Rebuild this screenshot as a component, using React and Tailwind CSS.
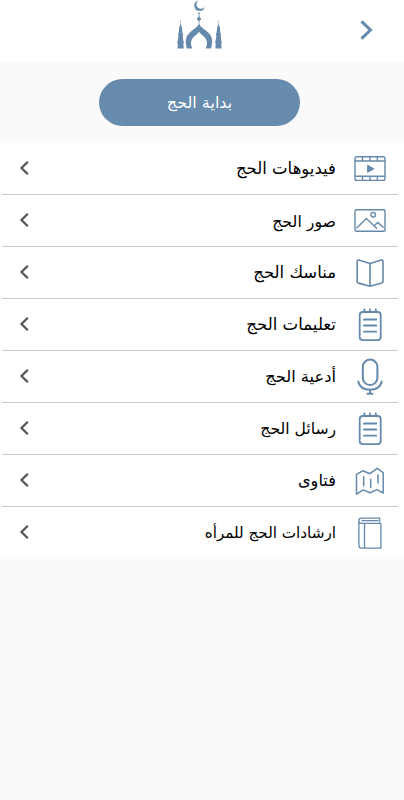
const items = [
  { label: 'فيديوهات الحج', icon: FilmIcon, size: 'text-[16.5px]' },
  { label: 'صور الحج', icon: ImageIcon, size: 'text-[15.8px]' },
  { label: 'مناسك الحج', icon: BookOpenIcon, size: 'text-[16.5px]' },
  { label: 'تعليمات الحج', icon: NotepadIcon, size: 'text-[16.6px]' },
  { label: 'أدعية الحج', icon: MicIcon, size: 'text-[16.3px]' },
  { label: 'رسائل الحج', icon: NotepadIcon, size: 'text-[15.6px]' },
  { label: 'فتاوى', icon: MapIcon, size: 'text-[16.2px]' },
  { label: 'ارشادات الحج للمرأه', icon: BookIcon, size: 'text-[15.2px]' },
];

function Icon({ children, strokeWidth = 1.4 }) {
  return (
    <svg
      className="w-9 h-[37px] shrink-0 text-[#6489ab]"
      viewBox="0 0 36 37"
      fill="none"
      stroke="currentColor"
      strokeWidth={strokeWidth}
      strokeLinecap="round"
      strokeLinejoin="round"
    >
      {children}
    </svg>
  );
}

function FilmIcon() {
  return (
    <Icon>
      <rect x="3" y="6.8" width="30" height="23.6" rx="2" />
      <path d="M3 11h30M3 26.2h30M10.5 7v4M18 7v4M25.4 7v4M10.5 26.2v4M18 26.2v4M25.4 26.2v4" />
      <path d="M15.8 15.6v6.4l5.6-3.2z" fill="currentColor" />
    </Icon>
  );
}

function ImageIcon() {
  return (
    <Icon>
      <rect x="3" y="7.7" width="30" height="21.6" rx="1.5" />
      <circle cx="21.2" cy="12.7" r="2.3" />
      <path d="M5 25.8l9.4-9.4 10.2 9.8M22.2 23.8l3.5-3.4 5.5 4.8" />
    </Icon>
  );
}

function BookOpenIcon() {
  return (
    <Icon strokeWidth={1.6}>
      <path d="M18 9.6L6.8 6.1Q5.2 5.8 5.2 7.4v20.2q0 1.2 1.2 1.5L18 32.2l11.8-3.1q1.2-.3 1.2-1.5V7.4q0-1.6-1.6-1.3zM18 9.6v22.2" />
    </Icon>
  );
}

function NotepadIcon() {
  return (
    <Icon strokeWidth={1.8}>
      <rect x="7.7" y="6" width="21" height="28.2" rx="3.2" />
      <path d="M12.4 3.4v2.4M18 3.4v2.4M23.8 3.4v2.4M11.9 13.5h12.4M11.9 19.5h12.4M11.9 25.7h12.4" />
    </Icon>
  );
}

function MicIcon() {
  return (
    <Icon strokeWidth={2}>
      <rect x="10.8" y="1.6" width="14.6" height="25.4" rx="7.3" />
      <path d="M6.2 23.6c1.6 5.4 6 8.2 11.8 8.2s10.2-2.8 11.8-8.2M18 32v3.6M15.5 35.7h5" />
    </Icon>
  );
}

function MapIcon() {
  return (
    <Icon strokeWidth={1.5}>
      <path d="M4.5 12.3L11 8.7l7 3 7.2-5.3 6 4.2v20.4l-6.2-3.4-7 3.2-6.8-2.9-6.7 4.3zM11.7 14.8v9M18.7 17.2v8.2M26 12.9v8" />
    </Icon>
  );
}

function BookIcon() {
  return (
    <Icon strokeWidth={1.3}>
      <path d="M27.7 7.8V4.2H9.4Q6.9 4.2 6.9 6.8v24.8q0 2.6 2.5 2.6h19.5V9.3H9.4Q6.9 9.3 6.9 6.9M12.5 9.5v24.5M10 6.7h16" />
    </Icon>
  );
}

function MosqueLogo() {
  return (
    <svg className="w-12 h-[50px] text-[#6489ab]" viewBox="176 0 48 50" fill="currentColor">
      <path d="M198.4 .4a5.3 5.3 0 1 0 6.3 6.6a4.62 4.62 0 1 1-6.3-6.6z" />
      <circle cx="199" cy="13.5" r="1" />
      <path d="M198.6 15h.8v1.6l1.9 2.3-1.9 2.2v2.3h-.8v-2.3l-1.9-2.2 1.9-2.3z" />
      <path d="M199 23.4c1.4 3.6 5 5.3 8.4 8.300 4.800 4.300 6 8.900 3.600 16.700h-5.300c2.200-4.800 1.600-8.500-1.600-11.600-1.900-1.800-4.100-3.200-5.100-5.200-1 2-3.200 3.400-5.100 5.200-3.200 3.100-3.800 6.800-1.600 11.600H187c-2.400-7.800-1.200-12.400 3.600-16.700 3.400-3 7-4.700 8.400-8.300z" />
      <path id="minaret" d="M179.8 20.5h.6l.4 3.5 1.3 4v1.300l.4 4.200.6.5v1.200l-.3.3.5 5.500.5.500v1.500l-.4.300.3 5.100h-6.200l.3-5.100-.4-.3V41l.5-.5.5-5.500-.3-.3v-1.200l.6-.5.4-4.200V28l1.300-4z" />
      <use href="#minaret" x="37.9" />
    </svg>
  );
}

export default function App() {
  return (
    <div dir="rtl" className="min-h-screen bg-[#fafafa] font-['DejaVu_Sans',sans-serif]">
      <header className="grid grid-cols-[1fr_auto_1fr] items-start h-[62px] bg-white">
        <button className="justify-self-start mr-[30px] mt-4" aria-label="رجوع">
          <svg className="w-4 h-7" viewBox="0 0 16 28" fill="none" stroke="#6489ab" strokeWidth="3">
            <path d="M3.5 5.3l9 8.7-9 8.7" />
          </svg>
        </button>
        <div className="pr-[5px]">
          <MosqueLogo />
        </div>
      </header>

      <div className="flex justify-center h-[81px] pt-[17px] pr-[5px]">
        <button className="w-[201px] h-[47px] rounded-full bg-[#678bad] text-white text-[16px]">
          بداية الحج
        </button>
      </div>

      <ul className="bg-white">
        {items.map(({ label, icon: ItemIcon, size }) => (
          <li
            key={label}
            className="flex items-center h-[52px] mr-[6px] ml-[2px] pr-[10px] pl-[17px] border-b border-[#cbcbcb] last:border-white"
          >
            <ItemIcon />
            <span className={`flex-1 mr-4 pt-0.5 text-black whitespace-nowrap ${size}`}>{label}</span>
            <svg className="w-3 h-4 relative bottom-px" viewBox="0 0 12 16" fill="none" stroke="#555" strokeWidth="2.2">
              <path d="M8.8 1.7L2.5 8l6.3 6.3" />
            </svg>
          </li>
        ))}
      </ul>
    </div>
  );
}
